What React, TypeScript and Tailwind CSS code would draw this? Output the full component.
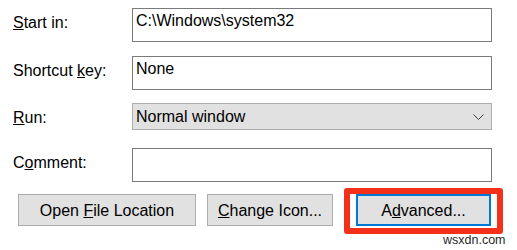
import React from "react";

// Windows shortcut properties: lower half of the Shortcut tab
const Field = ({ value, muted }: { value?: string; muted?: boolean }) => (
  <div
    className={`w-[360px] h-[34px] border px-[3px] pt-[3px] leading-[18px] whitespace-nowrap ${
      muted ? "border-[#adadad] bg-[#e1e1e1]" : "border-[#7a7a7a] bg-white"
    }`}
  >
    {value}
  </div>
);

const Label = ({ children }: { children: React.ReactNode }) => (
  <div className="w-[119px] shrink-0 pt-[6px] leading-[18px] whitespace-nowrap">{children}</div>
);

const Btn = ({ children, w, active }: { children: React.ReactNode; w: string; active?: boolean }) => (
  <div
    className={`${w} h-[32px] flex items-center justify-center pt-[1px] leading-[18px] bg-[#e1e1e1] whitespace-nowrap ${
      active ? "border-2 border-[#0078d7]" : "border border-[#adadad]"
    }`}
  >
    {children}
  </div>
);

export default function App() {
  return (
    <div className="relative w-[517px] h-[250px] bg-white text-black text-[16px] pt-[8px] font-['Liberation_Sans',Arial,sans-serif] overflow-hidden">
      <div className="flex pl-[13px]">
        <Label>
          <u>S</u>tart in:
        </Label>
        <Field value="C:\Windows\system32" />
      </div>

      <div className="flex pl-[13px] mt-[14px]">
        <Label>
          Shortcut <u>k</u>ey:
        </Label>
        <Field value="None" />
      </div>

      <div className="flex pl-[13px] mt-[13px]">
        <Label>
          <u>R</u>un:
        </Label>
        <div className="w-[360px] h-[27px] border border-[#adadad] bg-[#e1e1e1] pl-[3px] pr-[7px] flex items-start justify-between">
          <span className="pt-[4px] leading-[18px]">Normal window</span>
          <svg width="11" height="6" viewBox="0 0 11 6" className="mt-[10px]">
            <path d="M0.5 0.5 L5.5 5.5 L10.5 0.5" fill="none" stroke="#404040" strokeWidth="1" />
          </svg>
        </div>
      </div>

      <div className="flex pl-[13px] mt-[18px]">
        <Label>
          C<u>o</u>mment:
        </Label>
        <Field />
      </div>

      <div className="flex items-start pl-[18px] mt-[6px] gap-[11px]">
        <div className="mt-[6px]">
          <Btn w="w-[178px]">
            Open&nbsp;<u>F</u>ile Location
          </Btn>
        </div>
        <div className="mt-[6px]">
          <Btn w="w-[126px]">
            <u>C</u>hange Icon...
          </Btn>
        </div>
        <div className="w-[159px] h-[46px] border-[6px] border-[#f4301a] rounded-[3px] px-[6px]">
          <Btn w="w-[135px]" active>
            A<u>d</u>vanced...
          </Btn>
        </div>
      </div>

      <div className="absolute left-[443px] top-[233px] text-[12.5px] leading-[14px] text-[#2a2a2a]">wsxdn.com</div>
    </div>
  );
}
